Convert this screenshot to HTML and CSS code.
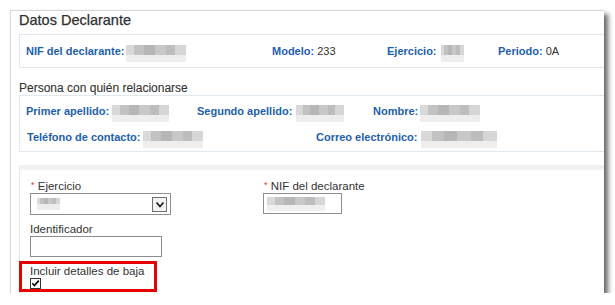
FILE: index.html
```html
<!DOCTYPE html>
<html lang="es">
<head>
<meta charset="utf-8">
<title>Datos Declarante</title>
<link rel="stylesheet" href="styles.css">
</head>
<body>
<div class="card">
  <h2 class="title">Datos Declarante</h2>
  <div class="box box-decl">
    <div class="row">
      <span class="item c-nif"><b>NIF del declarante:</b><i class="blur b-nif"></i></span>
      <span class="item c-mod"><b>Modelo:</b> 233</span>
      <span class="item c-eje"><b>Ejercicio:</b><i class="blur b-eje"></i></span>
      <span class="item"><b>Periodo:</b> 0A</span>
    </div>
  </div>
  <h3 class="subtitle">Persona con quién relacionarse</h3>
  <div class="box box-person">
    <div class="row">
      <span class="item c-ape1"><b>Primer apellido:</b><i class="blur b-ape1"></i></span>
      <span class="item c-ape2"><b>Segundo apellido:</b><i class="blur b-ape2"></i></span>
      <span class="item"><b>Nombre:</b><i class="blur b-nom"></i></span>
    </div>
    <div class="row">
      <span class="item c-tel"><b>Teléfono de contacto:</b><i class="blur b-tel"></i></span>
      <span class="item"><b>Correo electrónico:</b><i class="blur b-mail"></i></span>
    </div>
  </div>
  <div class="form-box">
    <div class="form-grid">
      <div class="field">
        <label class="lbl"><span class="req">*</span> Ejercicio</label>
        <div class="select">
          <i class="blur b-sel"></i>
          <span class="drop"><svg width="12" height="13" viewBox="0 0 12 13"><path d="M2.5 4.5 L6 8.5 L9.5 4.5" fill="none" stroke="#1a1a1a" stroke-width="1.7"/></svg></span>
        </div>
      </div>
      <div class="field">
        <label class="lbl"><span class="req">*</span> NIF del declarante</label>
        <div class="input input-nif"><i class="blur b-inp"></i></div>
      </div>
      <div class="field">
        <label class="lbl">Identificador</label>
        <div class="input input-id"></div>
      </div>
      <div></div>
      <div class="field field-check">
        <label class="lbl">Incluir detalles de baja</label>
        <span class="check"><svg width="11" height="11" viewBox="0 0 11 11"><rect x="0.5" y="0.5" width="10" height="10" fill="#fff" stroke="#333"/><path d="M2.3 5.3 L4.4 7.6 L8.8 2.6" fill="none" stroke="#000" stroke-width="1.6"/></svg></span>
      </div>
    </div>
  </div>
</div>
</body>
</html>
```

FILE: styles.css
```css
*, *::before, *::after { box-sizing: border-box; }
html, body { margin: 0; padding: 0; background: #fff; }
body { font-family: "Liberation Sans", Arial, sans-serif; color: #333; }

.card {
  position: relative;
  display: flex;
  flex-direction: column;
  margin: 10px 0 0 10px;
  width: 594px;
  height: 283px;
  border-left: 1px solid #d9d9d9;
  border-top: 1px solid #d6d6d6;
  box-shadow: 4px 4px 5px rgba(0, 0, 0, 0.6);
  padding-left: 8px;
  background: #fff;
}

.title {
  margin: 1px 0 0;
  font-size: 14.5px;
  line-height: 17px;
  font-weight: normal;
  color: #2f2f2f;
  -webkit-text-stroke: 0.25px #2f2f2f;
}

.box {
  border: 1px solid #dfe7ef;
  border-right: 0;
  padding: 9px 0 9px 6px;
}
.box-decl { margin-top: 5px; }

.row {
  display: flex;
  height: 14px;
  line-height: 14px;
  font-size: 11px;
  white-space: nowrap;
  color: #333;
}
.row b { color: #1d5fae; font-weight: bold; }

.c-nif { width: 246px; }
.c-mod { width: 115px; }
.c-eje { width: 111px; }
.c-ape1 { width: 171px; }
.c-ape2 { width: 176px; }
.c-tel { width: 290px; padding-left: 1px; }

.blur {
  display: inline-block;
  height: 10px;
  margin-left: 2px;
  background: linear-gradient(90deg, #d9d9d9 0 14%, #c2c2c2 14% 30%, #b6b6b6 30% 48%, #c8c8c8 48% 66%, #bdbdbd 66% 82%, #d6d6d6 82% 100%);
  box-shadow: 0 7px 0 #eeeeee;
}
.b-nif { width: 60px; }
.b-eje { width: 23px; margin-left: 4px; }
.b-ape1 { width: 57px; margin-left: 3px; }
.b-ape2 { width: 48px; margin-left: 4px; }
.b-nom { width: 60px; }
.b-tel { width: 60px; margin-left: 3px; }
.b-mail { width: 76px; margin-left: 4px; }

.subtitle {
  margin: 13px 0 0;
  font-size: 12px;
  line-height: 14px;
  font-weight: normal;
  color: #333;
  -webkit-text-stroke: 0.1px #333;
}

.box-person {
  display: flex;
  flex-direction: column;
  gap: 12px;
  padding: 8px 0 7px 6px;
}

.form-box {
  flex: 1;
  margin-top: 13px;
  border-top: 5px solid #f1f1f1;
  border-left: 1px solid #e6e6e6;
  padding: 9px 0 0 10px;
}

.form-grid {
  display: grid;
  grid-template-columns: 233px auto;
  row-gap: 7px;
}

.field { display: flex; flex-direction: column; align-items: flex-start; }

.lbl {
  font-size: 11.5px;
  line-height: 14px;
  height: 14px;
  color: #333;
  white-space: nowrap;
}
.req {
  color: #e03a3a;
  font-size: 9px;
  vertical-align: top;
  margin-left: 1px;
  line-height: 12px;
}

.select {
  width: 141px;
  height: 22px;
  border: 1px solid #8e8e8e;
  display: flex;
  align-items: center;
  justify-content: space-between;
  padding: 0 3px 0 6px;
  background: #fff;
}
.select .blur { margin-left: 0; width: 23px; height: 6px; box-shadow: 0 6px 0 #ededed; margin-top: -6px; }
.drop {
  width: 15px;
  height: 15px;
  border: 1px solid #707070;
  background: #f3f3f3;
  display: flex;
  align-items: center;
  justify-content: center;
}

.input {
  height: 21px;
  border: 1px solid #8e8e8e;
  background: #fff;
  display: flex;
  align-items: center;
  padding-left: 3px;
}
.input-nif { width: 79px; }
.input-id { width: 132px; }
.input .blur { margin-left: 0; width: 58px; height: 8px; box-shadow: 0 6px 0 #efefef; margin-top: -5px; }

.check { display: block; width: 11px; height: 11px; }
.check svg { display: block; }

.field-check { position: relative; }
.field-check::after {
  content: "";
  position: absolute;
  left: -11px;
  top: -3px;
  width: 138px;
  height: 31px;
  border: 3px solid #e60000;
}
```
